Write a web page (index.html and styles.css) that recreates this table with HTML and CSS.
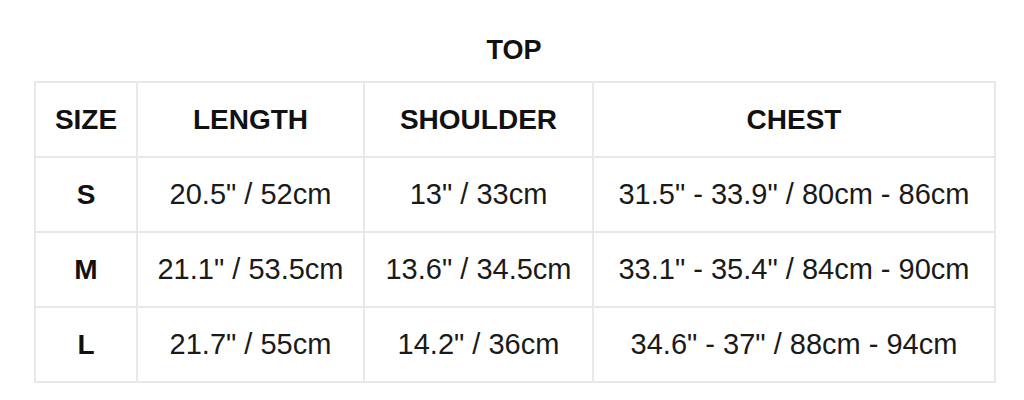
FILE: index.html
```html
<!DOCTYPE html>
<html>
<head>
<meta charset="utf-8">
<link rel="stylesheet" href="styles.css">
</head>
<body>
<div class="wrap">
  <h2 class="title">TOP</h2>
  <table class="size-table">
    <colgroup>
      <col class="c1"><col class="c2"><col class="c3"><col class="c4">
    </colgroup>
    <thead>
      <tr><th>SIZE</th><th>LENGTH</th><th>SHOULDER</th><th>CHEST</th></tr>
    </thead>
    <tbody>
      <tr><th>S</th><td>20.5" / 52cm</td><td>13" / 33cm</td><td>31.5" - 33.9" / 80cm - 86cm</td></tr>
      <tr><th>M</th><td>21.1" / 53.5cm</td><td>13.6" / 34.5cm</td><td>33.1" - 35.4" / 84cm - 90cm</td></tr>
      <tr><th>L</th><td>21.7" / 55cm</td><td>14.2" / 36cm</td><td>34.6" - 37" / 88cm - 94cm</td></tr>
    </tbody>
  </table>
</div>
</body>
</html>
```
FILE: styles.css
```css
html, body {
  margin: 0;
  padding: 0;
  background: #fff;
}
body {
  font-family: "Liberation Sans", Arial, sans-serif;
  color: #111;
}
.wrap {
  padding: 34px 30px 0 34px;
}
.title {
  margin: 0 0 14px 0;
  text-align: center;
  font-size: 27px;
  font-weight: bold;
  line-height: 33px;
  width: 960px;
}
.size-table {
  border-collapse: collapse;
  width: 960px;
  table-layout: fixed;
}
.c1 { width: 102px; }
.c2 { width: 227px; }
.c3 { width: 229px; }
.c4 { width: 402px; }
.size-table th,
.size-table td {
  border: 2px solid #e8e8e8;
  height: 73px;
  padding: 0;
  text-align: center;
  vertical-align: middle;
  font-size: 28px;
}
.size-table th {
  font-weight: bold;
}
.size-table td {
  font-weight: normal;
  font-size: 29px;
  color: #1a1a1a;
}
```
